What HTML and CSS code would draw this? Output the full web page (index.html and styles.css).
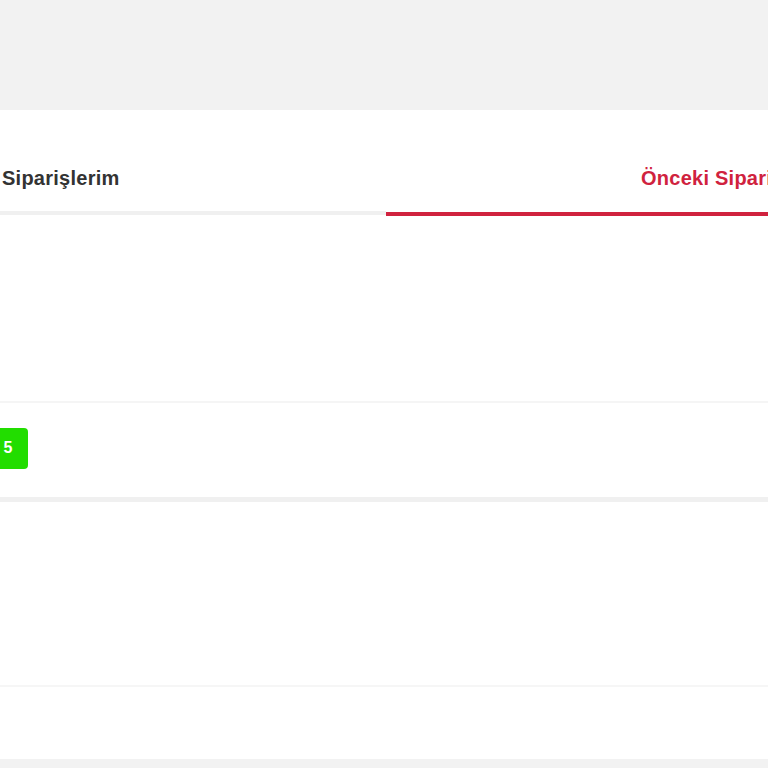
FILE: index.html
```html
<!DOCTYPE html>
<html lang="tr">
<head>
<meta charset="utf-8">
<link rel="stylesheet" href="styles.css">
</head>
<body>
<div class="top"></div>
<div class="panel">
  <div class="tabs">
    <div class="tab">Siparişlerim</div>
    <div class="tab active">Önceki Siparişlerim</div>
  </div>
  <div class="empty"></div>
  <div class="row">
    <span class="badge">5</span>
  </div>
  <div class="sep"></div>
  <div class="empty2"></div>
  <div class="row2"></div>
</div>
<div class="bottom"></div>
</body>
</html>
```
FILE: styles.css
```css
html, body { margin: 0; padding: 0; }
body {
  background: #f2f2f2;
  overflow: hidden;
  font-family: "Liberation Sans", Arial, sans-serif;
}
.top { height: 110px; background: #f2f2f2; }
.panel { background: #fff; }
.tabs {
  display: flex;
  margin-left: -253px;
  width: 1278px;
  height: 105px;
}
.tab {
  width: 639px;
  box-sizing: border-box;
  padding-left: 255px;
  padding-top: 57px;
  font-size: 20px;
  letter-spacing: 0.25px;
  font-weight: 700;
  color: #333;
  border-bottom: 4px solid #f0f0f0;
  white-space: nowrap;
}
.tab.active {
  color: #d0223e;
  border-bottom: 4px solid #d0223e;
  margin-bottom: -1px;
}
.empty { height: 186px; border-bottom: 2px solid #f5f5f5; }
.row {
  height: 94px;
  display: flex;
  align-items: center;
  margin-left: -12px;
  padding-bottom: 4px;
  box-sizing: border-box;
}
.badge {
  width: 40px;
  height: 41px;
  border-radius: 4px;
  background: #22dd00;
  color: #fff;
  font-weight: 700;
  font-size: 16px;
  display: flex;
  align-items: center;
  justify-content: center;
}
.sep { height: 5px; background: #f0f0f0; }
.empty2 { height: 183px; border-bottom: 2px solid #f6f6f6; }
.row2 { height: 72px; }
.bottom { height: 20px; background: #f2f2f2; }
```
